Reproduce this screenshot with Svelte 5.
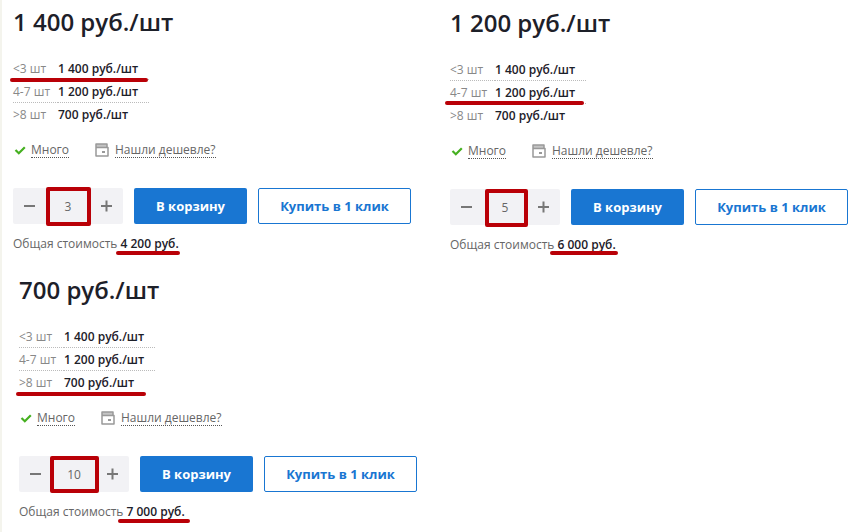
<script>
  const tiers = [
    { range: '<3 шт', price: '1 400 руб./шт' },
    { range: '4-7 шт', price: '1 200 руб./шт' },
    { range: '>8 шт', price: '700 руб./шт' }
  ];

  // Each mark is [left, top, width, height] relative to the block it highlights.
  const cards = [
    { id: 'a', price: '1 400 руб./шт', qty: '3', total: '4 200 руб.', active: 0, row: [-3, 21, 138, 4], box: [33, -1, 45, 39], sum: [-5, 16, 64, 4] },
    { id: 'b', price: '1 200 руб./шт', qty: '5', total: '6 000 руб.', active: 1, row: [-5, 20, 139, 4], box: [35, 0, 43, 38], sum: [-8, 15, 68, 4] },
    { id: 'c', price: '700 руб./шт', qty: '10', total: '7 000 руб.', active: 2, row: [-3, 21, 130, 4], box: [31, 0, 49, 37], sum: [-9, 16, 72, 4] }
  ];

  const place = ([x, y, w, h]) => `left:${x}px;top:${y}px;width:${w}px;height:${h}px`;
</script>

<main>
  {#each cards as card (card.id)}
    <section class="card {card.id}">
      <h2>{card.price}</h2>

      <table>
        <tbody>
          {#each tiers as tier, i}
            <tr>
              <th scope="row">
                {tier.range}
                {#if i === card.active}<i class="line" style={place(card.row)}></i>{/if}
              </th>
              <td>{tier.price}</td>
            </tr>
          {/each}
        </tbody>
      </table>

      <div class="info">
        <svg class="check" width="12" height="11" viewBox="0 0 12 11" aria-hidden="true">
          <path d="M1.5 5 L4.8 8.2 L10.8 2.2" fill="none" stroke="#45b020" stroke-width="2.2" />
        </svg>
        <a href="#stock">Много</a>
        <svg class="wallet" width="14" height="14" viewBox="0 0 14 14" aria-hidden="true">
          <path d="M1 1 H12 V4 H1 Z" fill="#c4c4c4" />
          <path d="M12 4 V1 H1 V13 H13 V4.5 H1" fill="none" stroke="#999" stroke-width="1.5" stroke-linejoin="round" />
          <rect x="7" y="8" width="3" height="2" fill="#999" />
        </svg>
        <a href="#cheaper">Нашли дешевле?</a>
      </div>

      <div class="buy">
        <div class="stepper">
          <button type="button" aria-label="Меньше">
            <svg width="12" height="12" viewBox="0 0 12 12"><path d="M0 6 H11" stroke="#777" stroke-width="2" /></svg>
          </button>
          <input type="text" value={card.qty} aria-label="Количество" />
          <button type="button" aria-label="Больше">
            <svg width="12" height="12" viewBox="0 0 12 12"><path d="M0 6 H11 M5.5 0.5 V11.5" stroke="#777" stroke-width="2" /></svg>
          </button>
          <i class="box" style={place(card.box)}></i>
        </div>
        <button type="button" class="cart">В корзину</button>
        <button type="button" class="click">Купить в 1 клик</button>
      </div>

      <p>Общая стоимость <b>{card.total}<i class="line" style={place(card.sum)}></i></b></p>
    </section>
  {/each}
</main>

<style>
  :global(body) {
    margin: 0;
    background: #fff;
  }
  main {
    box-sizing: border-box;
    min-height: 100vh;
    display: grid;
    grid-template-columns: repeat(auto-fill, minmax(398px, 1fr));
    align-content: start;
    column-gap: 38px;
    padding: 6px 11px 0;
    border-left: 2px solid #f4f4ed;
    overflow: hidden;
    font: 12px/16px 'Open Sans', 'Noto Sans', sans-serif;
    color: #666;
  }
  .card {
    height: 268px;
  }
  .b {
    padding-top: 1px;
    height: 267px;
  }
  .c {
    padding-left: 6px;
    height: 258px;
  }
  h2 {
    margin: 0 0 19px;
    font-size: 24px;
    line-height: 32px;
    font-weight: 600;
    color: #1d2029;
  }
  table {
    width: 136px;
    border-collapse: separate;
    border-spacing: 0;
    table-layout: fixed;
  }
  tr {
    position: relative;
  }
  th,
  td {
    box-sizing: border-box;
    height: 23px;
    padding: 2px 0 0;
    text-align: left;
    white-space: nowrap;
    border-bottom: 1px dotted #bbb;
  }
  th {
    width: 45px;
    font-weight: 400;
    color: #888;
  }
  td {
    font-weight: 600;
    color: #1d2029;
  }
  tr:last-child > * {
    border-bottom-color: transparent;
  }
  .line {
    position: absolute;
    background: #b90007;
    border-radius: 2px;
  }
  .info {
    display: flex;
    align-items: center;
    height: 16px;
    margin-top: 16px;
  }
  .check {
    margin: 0 5px 0 1px;
  }
  .wallet {
    margin: 0 6px 0 26px;
  }
  a {
    color: #666;
    text-decoration: none;
    line-height: 15px;
    border-bottom: 1px dotted #555;
  }
  .buy {
    display: flex;
    gap: 11px;
    margin-top: 30px;
  }
  .stepper {
    position: relative;
    display: flex;
    width: 110px;
    height: 36px;
    background: #f2f2f5;
    border-radius: 2px;
  }
  button {
    box-sizing: border-box;
    flex: none;
    height: 36px;
    padding: 0;
    border: 0;
    border-radius: 2px;
    background: none;
    font: 700 13px/18px 'Open Sans', 'Noto Sans', sans-serif;
    cursor: pointer;
  }
  .stepper button {
    width: 33px;
    display: flex;
    align-items: center;
    justify-content: center;
  }
  input {
    flex: 1;
    min-width: 0;
    padding: 2px 0 0;
    border: 0;
    background: none;
    text-align: center;
    font: 12px/16px 'Open Sans', 'Noto Sans', sans-serif;
    color: #666;
  }
  .box {
    position: absolute;
    box-sizing: border-box;
    border: 4px solid #b90007;
    border-radius: 2px;
    pointer-events: none;
  }
  .cart {
    width: 113px;
    background: #1976d2;
    color: #fff;
  }
  .click {
    width: 153px;
    border: 1px solid #1976d2;
    background: #fff;
    color: #1976d2;
  }
  p {
    margin: 12px 0 0;
  }
  b {
    position: relative;
    font-weight: 600;
    color: #1d2029;
  }
</style>
